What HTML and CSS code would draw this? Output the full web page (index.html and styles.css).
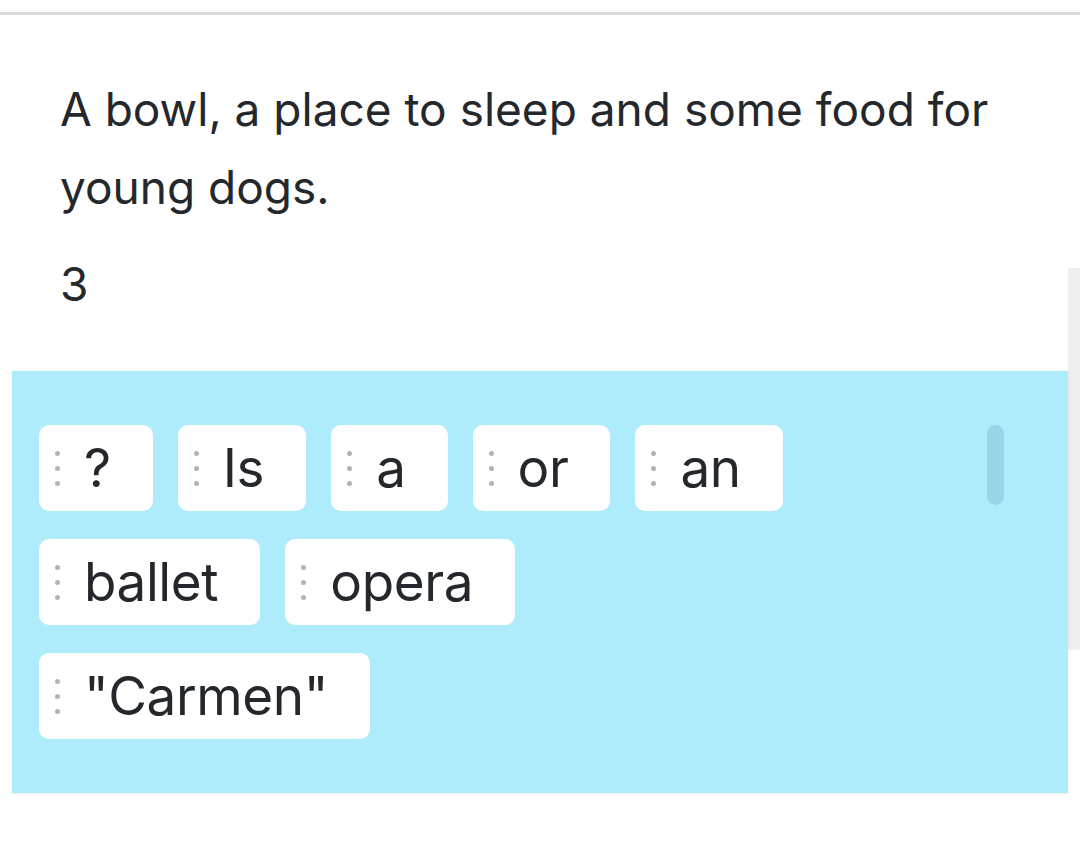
FILE: index.html
```html
<!DOCTYPE html>
<html>
<head>
<meta charset="utf-8">
<link rel="stylesheet" href="styles.css">
</head>
<body>
<div class="topline"></div>
<p class="question">A bowl, a place to sleep and some food for young dogs.</p>
<div class="lower">
  <div class="main">
    <div class="number">3</div>
    <div class="panel">
      <div class="rows">
        <div class="row">
          <div class="chip"><span class="grip"><i></i><i></i><i></i></span><span class="word">?</span></div>
          <div class="chip"><span class="grip"><i></i><i></i><i></i></span><span class="word">Is</span></div>
          <div class="chip"><span class="grip"><i></i><i></i><i></i></span><span class="word">a</span></div>
          <div class="chip"><span class="grip"><i></i><i></i><i></i></span><span class="word">or</span></div>
          <div class="chip"><span class="grip"><i></i><i></i><i></i></span><span class="word">an</span></div>
        </div>
        <div class="row">
          <div class="chip"><span class="grip"><i></i><i></i><i></i></span><span class="word">ballet</span></div>
          <div class="chip"><span class="grip"><i></i><i></i><i></i></span><span class="word">opera</span></div>
        </div>
        <div class="row">
          <div class="chip"><span class="grip"><i></i><i></i><i></i></span><span class="word">"Carmen"</span></div>
        </div>
      </div>
      <div class="thumb"></div>
    </div>
  </div>
  <div class="track"></div>
</div>
</body>
</html>
```
FILE: styles.css
```css
html, body {
  margin: 0;
  padding: 0;
  background: #ffffff;
}
body {
  font-family: "Inter", "Lato", "Liberation Sans", sans-serif;
  color: #24282c;
  width: 1080px;
  height: 844px;
  overflow: hidden;
}
.topline {
  margin-top: 12px;
  height: 3px;
  background: #d9d9d9;
}
.question {
  margin: 0;
  padding: 55px 60px 0 60px;
  font-size: 46px;
  line-height: 78px;
}
.lower {
  display: flex;
  align-items: flex-start;
  margin-top: 30px;
}
.main {
  flex: 1;
  display: flex;
  flex-direction: column;
}
.number {
  padding-left: 60px;
  font-size: 46px;
  line-height: 56px;
  height: 56px;
  margin-bottom: 59px;
}
.panel {
  position: relative;
  margin-left: 12px;
  height: 422px;
  box-sizing: border-box;
  padding: 54px 27px;
  background: #aeecfc;
  box-shadow: 0 1px 2px rgba(0, 0, 0, 0.08);
}
.rows {
  display: flex;
  flex-direction: column;
  gap: 28px;
}
.row {
  display: flex;
  gap: 25px;
}
.chip {
  height: 86px;
  display: flex;
  align-items: center;
  padding: 0 42px 0 16px;
  background: #ffffff;
  border-radius: 10px;
}
.grip {
  display: flex;
  flex-direction: column;
  gap: 10px;
  margin-right: 24px;
}
.grip i {
  display: block;
  width: 5px;
  height: 5px;
  border-radius: 50%;
  background: #b3b3b3;
}
.word {
  font-size: 53px;
  line-height: 1;
  letter-spacing: -0.4px;
}
.thumb {
  position: absolute;
  left: 975px;
  top: 54px;
  width: 17px;
  height: 80px;
  border-radius: 9px;
  background: #99d5e9;
}
.track {
  width: 12px;
  height: 382px;
  margin-top: 12px;
  background: #efefef;
}
```
